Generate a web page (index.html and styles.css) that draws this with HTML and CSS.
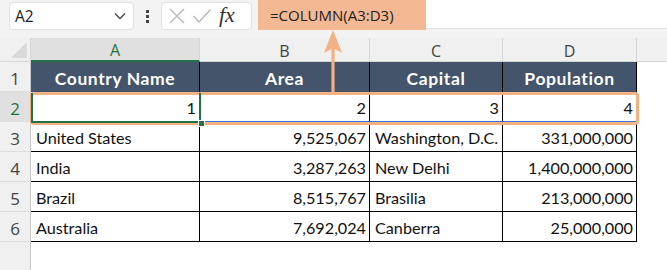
FILE: index.html
```html
<!DOCTYPE html>
<html>
<head>
<meta charset="utf-8">
<link rel="stylesheet" href="styles.css">
</head>
<body>
<div class="app">
  <div class="toolbar">
    <div class="namebox"><span>A2</span>
      <svg width="12" height="8" viewBox="0 0 12 8"><path d="M1 1.5 L6 6.5 L11 1.5" fill="none" stroke="#444" stroke-width="1.3"/></svg>
    </div>
    <div class="dots"><i></i><i></i><i></i></div>
    <div class="fxbox">
      <svg width="18" height="18" viewBox="0 0 18 18"><path d="M2 2 L16 16 M16 2 L2 16" stroke="#b8b8b8" stroke-width="1.4" fill="none"/></svg>
      <svg width="20" height="18" viewBox="0 0 20 18"><path d="M1.5 9 L7 15 L18.5 2.5" stroke="#b8b8b8" stroke-width="1.4" fill="none"/></svg>
      <span class="fx">fx</span>
    </div>
    <div class="formula"><span class="ftext">=COLUMN(A3:D3)</span></div>
  </div>
  <div class="sheet">
    <div class="corner"><div class="tri"></div></div>
    <div class="ch sel">A</div>
    <div class="ch">B</div>
    <div class="ch">C</div>
    <div class="ch">D</div>
    <div class="ch last"></div>

    <div class="rh">1</div>
    <div class="c th">Country Name</div>
    <div class="c th">Area</div>
    <div class="c th">Capital</div>
    <div class="c th">Population</div>
    <div class="e"></div>

    <div class="rh sel">2</div>
    <div class="c r act">1</div>
    <div class="c r blue">2</div>
    <div class="c r blue">3</div>
    <div class="c r blue">4</div>
    <div class="e"></div>

    <div class="rh">3</div>
    <div class="c">United States</div>
    <div class="c r">9,525,067</div>
    <div class="c">Washington, D.C.</div>
    <div class="c r">331,000,000</div>
    <div class="e"></div>

    <div class="rh">4</div>
    <div class="c">India</div>
    <div class="c r">3,287,263</div>
    <div class="c">New Delhi</div>
    <div class="c r">1,400,000,000</div>
    <div class="e"></div>

    <div class="rh">5</div>
    <div class="c">Brazil</div>
    <div class="c r">8,515,767</div>
    <div class="c">Brasilia</div>
    <div class="c r">213,000,000</div>
    <div class="e"></div>

    <div class="rh">6</div>
    <div class="c">Australia</div>
    <div class="c r">7,692,024</div>
    <div class="c">Canberra</div>
    <div class="c r">25,000,000</div>
    <div class="e"></div>

    <div class="rh tail"></div>
    <div class="e span"></div>
  </div>

  <div class="hl-row"></div>
  <div class="active"></div>
  <div class="handle"></div>
  <svg class="arrow" width="22" height="64" viewBox="0 0 22 64">
    <path d="M11 1 L20 24 L12.6 20 L12.6 63 L9.4 63 L9.4 20 L2 24 Z" fill="#f4b183"/>
  </svg>
</div>
</body>
</html>
```

FILE: styles.css
```css
html, body {
  margin: 0;
  padding: 0;
  background: #fff;
}
.app {
  position: relative;
  width: 667px;
  height: 270px;
  overflow: hidden;
}
.toolbar {
  height: 38px;
  background: #f3f3f3;
  display: flex;
  align-items: flex-start;
  box-sizing: border-box;
  padding-top: 2px;
  font-family: "Open Sans", "Noto Sans", sans-serif;
}
.namebox {
  margin-left: 9px;
  width: 125px;
  height: 28px;
  box-sizing: border-box;
  background: #fff;
  border: 1px solid #e0e0e0;
  border-radius: 4px;
  display: flex;
  align-items: center;
  justify-content: space-between;
  padding: 0 7px 0 5px;
  font-size: 15.5px;
  color: #222;
}
.dots {
  width: 27px;
  height: 28px;
  display: flex;
  flex-direction: column;
  align-items: center;
  justify-content: center;
  gap: 2px;
}
.dots i {
  display: block;
  width: 3px;
  height: 3px;
  background: #444;
}
.fxbox {
  width: 91px;
  height: 28px;
  box-sizing: border-box;
  background: #fff;
  border: 1px solid #e0e0e0;
  border-radius: 4px;
  display: flex;
  align-items: center;
  padding-left: 6px;
  gap: 6px;
}
.fx {
  font-family: "Liberation Serif", "DejaVu Serif", serif;
  font-style: italic;
  font-size: 22px;
  color: #333;
  margin-left: 1px;
  margin-top: -3px;
}
.formula {
  margin-left: 6px;
  flex: 1;
  height: 28px;
  margin-top: -2px;
  background: #fff;
  border-bottom: 1px solid #e0e0e0;
  position: relative;
}
.ftext {
  display: block;
  width: 168px;
  height: 30px;
  box-sizing: border-box;
  background: #f4b993;
  font-size: 15px;
  line-height: 30px;
  padding-left: 12px;
  color: #222;
}
.sheet {
  display: grid;
  grid-template-columns: 31px 169px 170px 133px 134px 1fr;
  grid-template-rows: 24px repeat(6, 30px) 1fr;
  height: 232px;
  font-family: Lato, "Liberation Sans", sans-serif;
  font-size: 16.2px;
  color: #111;
}
.corner {
  background: #f0f0f0;
  border-right: 1px solid #d6d6d6;
  border-bottom: 1px solid #d6d6d6;
  box-sizing: border-box;
  position: relative;
}
.tri {
  position: absolute;
  right: 3px;
  bottom: 3px;
  width: 0;
  height: 0;
  border-left: 16px solid transparent;
  border-bottom: 16px solid #dadada;
}
.ch {
  background: #f0f0f0;
  border-right: 1px solid #d6d6d6;
  border-bottom: 1px solid #d6d6d6;
  box-sizing: border-box;
  display: flex;
  align-items: center;
  justify-content: center;
  font-family: "Open Sans", "Noto Sans", sans-serif;
  font-size: 16px;
  color: #444;
  padding-top: 2px;
}
.ch.sel {
  background: #e0e0e0;
  color: #217346;
  border-bottom: 2px solid #217346;
}
.ch.last {
  border-right: none;
}
.rh {
  background: #f0f0f0;
  border-right: 1px solid #c8c8c8;
  border-bottom: 1px solid #dcdcdc;
  box-sizing: border-box;
  display: flex;
  align-items: center;
  justify-content: center;
  font-family: "Open Sans", "Noto Sans", sans-serif;
  font-size: 17px;
  color: #444;
  padding-top: 3px;
}
.rh.sel {
  background: #e0e0e0;
  color: #217346;
}
.rh.tail {
  border-bottom: none;
}
.c {
  box-sizing: border-box;
  border-right: 1px solid #000;
  border-bottom: 1px solid #000;
  display: flex;
  align-items: center;
  padding: 2px 3px 0 5px;
  white-space: nowrap;
}
.c.r {
  justify-content: flex-end;
}
.c.th {
  background: #44546a;
  color: #fff;
  font-weight: 700;
  font-size: 17.5px;
  letter-spacing: 0.6px;
  justify-content: center;
  border-bottom: none;
  padding-left: 3px;
}
.c.blue {
  border-bottom: 1px solid #3a78d8;
}
.c.act {
  border-bottom: 1px solid #217346;
}
.e {
  background: #fff;
}
.e.span {
  grid-column: 2 / 7;
}
.hl-row {
  position: absolute;
  left: 30px;
  top: 92px;
  width: 609px;
  height: 33px;
  box-sizing: border-box;
  border: 3px solid #f4b183;
  border-radius: 4px;
  pointer-events: none;
}
.active {
  position: absolute;
  left: 31px;
  top: 93px;
  width: 170px;
  height: 30px;
  box-sizing: border-box;
  border: 2px solid #217346;
  border-top: none;
}
.handle {
  position: absolute;
  left: 198px;
  top: 120px;
  width: 5px;
  height: 5px;
  background: #217346;
  border: 1px solid #fff;
}
.arrow {
  position: absolute;
  left: 322px;
  top: 29px;
}
```
